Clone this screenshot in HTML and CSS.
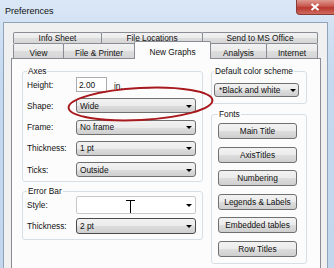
FILE: index.html
```html
<!DOCTYPE html>
<html lang="en">
<head>
    <meta charset="UTF-8">
    <title>Preferences</title>
    <link rel="stylesheet" href="styles.css">
</head>
<body>
    <div class="window">
        <div class="titlebar">
            <span class="title">Preferences</span>
            <span class="close">
                <svg width="10" height="8" viewBox="0 0 10 8">
                    <path d="M1.5 1 L8.5 7 M8.5 1 L1.5 7" stroke="#fff" stroke-width="2" />
                </svg>
            </span>
        </div>

        <div class="client">
            <div class="tabs">
                <div class="tab-row back">
                    <div class="tab t-info">Info Sheet</div>
                    <div class="tab t-loc">File Locations</div>
                    <div class="tab t-send">Send to MS Office</div>
                </div>
                <div class="tab-row front">
                    <div class="tab t-view">View</div>
                    <div class="tab t-print">File &amp; Printer</div>
                    <div class="tab t-graphs active">New Graphs</div>
                    <div class="tab t-analysis">Analysis</div>
                    <div class="tab t-net">Internet</div>
                </div>
            </div>

            <div class="panel">
                <div class="col-left">
                    <fieldset class="group axes">
                        <legend>Axes</legend>
                        <div class="row">
                            <span class="lbl">Height:</span>
                            <span class="edit">2.00</span>
                            <span class="unit">in.</span>
                            <span class="faint"></span>
                        </div>
                        <div class="row">
                            <span class="lbl">Shape:</span>
                            <span class="combo">Wide<i class="arrow"></i></span>
                        </div>
                        <div class="row">
                            <span class="lbl">Frame:</span>
                            <span class="combo">No frame<i class="arrow"></i></span>
                        </div>
                        <div class="row">
                            <span class="lbl">Thickness:</span>
                            <span class="combo">1 pt<i class="arrow"></i></span>
                        </div>
                        <div class="row">
                            <span class="lbl">Ticks:</span>
                            <span class="combo">Outside<i class="arrow"></i></span>
                        </div>
                    </fieldset>

                    <fieldset class="group errbar">
                        <legend>Error Bar</legend>
                        <div class="row tall">
                            <span class="lbl">Style:</span>
                            <span class="combo plain">
                                <svg class="bar-style" width="9" height="14" viewBox="0 0 9 14">
                                    <path d="M0 1.5 H9 M4.5 1.5 V14" stroke="#000" stroke-width="1" />
                                </svg>
                                <i class="arrow"></i>
                            </span>
                        </div>
                        <div class="row mid">
                            <span class="lbl">Thickness:</span>
                            <span class="combo focus">2 pt<i class="arrow"></i></span>
                        </div>
                    </fieldset>
                </div>

                <div class="col-right">
                    <fieldset class="group scheme">
                        <legend>Default color scheme</legend>
                        <span class="combo small">*Black and white<i class="arrow"></i></span>
                    </fieldset>

                    <fieldset class="group fonts">
                        <legend>Fonts</legend>
                        <button class="btn">Main Title</button>
                        <button class="btn">AxisTitles</button>
                        <button class="btn">Numbering</button>
                        <button class="btn">Legends &amp; Labels</button>
                        <button class="btn">Embedded tables</button>
                        <button class="btn">Row Titles</button>
                    </fieldset>
                </div>
            </div>
        </div>

        <!-- red mark drawn over the Shape box -->
        <svg class="mark" width="334" height="268" viewBox="0 0 334 268">
            <ellipse cx="140.5" cy="104" rx="72" ry="16" transform="rotate(-3 140.5 104)"
                     fill="none" stroke="#a8191e" stroke-width="2" />
        </svg>
    </div>
</body>
</html>
```

FILE: styles.css
```css
* {
    box-sizing: border-box;
}

body {
    margin: 0;
    font-family: "Liberation Sans", Arial, sans-serif;
    font-size: 8.3px;
    color: #111;
    background: #fff;
}

.window {
    position: relative;
    width: 334px;
    height: 268px;
    overflow: hidden;
    background: linear-gradient(to bottom, #dae7f6, #c4d8ef 30%, #c2d6ee);
}

.titlebar {
    height: 22px;
    display: flex;
    justify-content: space-between;
    align-items: flex-start;
}

.title {
    font-size: 9px;
    line-height: 10px;
    padding: 6px 0 0 5px;
}

.close {
    width: 38px;
    height: 15px;
    display: flex;
    align-items: center;
    justify-content: center;
    padding-right: 2px;
    background: linear-gradient(to bottom, #dd9990, #c8574e 45%, #b9372e 55%, #cf6a5f);
    border: 1px solid #8a3b35;
    border-top: none;
    border-right: none;
    border-radius: 0 0 0 4px;
}

.client {
    width: 325px;
    height: 246px;
    margin-left: 3px;
    background: #f0f0f0;
    border: 1px solid #8fa3bb;
    border-bottom: none;
    padding: 9px 0 0 7px;
}

/* tabs */
.tabs {
    margin-left: 2px;
}

.tab-row {
    display: flex;
}

.tab-row.back {
    height: 11px;
}

.tab-row.front {
    height: 15px;
}

.tab {
    height: 100%;
    display: flex;
    align-items: center;
    justify-content: center;
    border: 1px solid #898c95;
    border-bottom: none;
    border-radius: 2px 2px 0 0;
    background: linear-gradient(to bottom, #f2f2f2, #ebebeb 50%, #dddddd 51%, #d6d6d6);
    margin-left: -1px;
    white-space: nowrap;
}

.tab-row.front .tab {
    padding-top: 3px;
}

.tab:first-child {
    margin-left: 0;
}

.t-info { width: 89px; }
.t-loc { width: 102px; }
.t-send { width: 116px; }
.t-view { width: 51px; }
.t-print { width: 72px; }
.t-graphs { width: 77px; }
.t-analysis { width: 57px; }
.t-net { width: 52px; }

.tab.active {
    position: relative;
    z-index: 1;
    height: 18px;
    margin-top: -2px;
    padding-top: 0;
    background: #fcfcfc;
}

/* page */
.panel {
    width: 310px;
    height: 220px;
    background: #fcfcfc;
    border: 1px solid #898c95;
    padding: 7px 0 0 10px;
    display: flex;
    gap: 8px;
    align-items: flex-start;
}

.col-left {
    width: 181px;
    display: flex;
    flex-direction: column;
    gap: 4px;
}

.col-right {
    width: 96px;
    display: flex;
    flex-direction: column;
    gap: 5px;
}

.group {
    margin: 0;
    min-width: 0;
    border: 1px solid #d5dfe5;
    border-radius: 3px;
    padding: 0 4px 4px;
}

.group legend {
    padding: 0 1px;
    line-height: 10px;
}

.axes {
    padding-top: 1px;
    display: flex;
    flex-direction: column;
    gap: 6.3px;
}

.errbar {
    padding-bottom: 5px;
    display: flex;
    flex-direction: column;
    gap: 4px;
}

.row {
    height: 15px;
    display: flex;
    align-items: center;
}

.row.tall {
    height: 18px;
}

.row.mid {
    height: 16px;
}

.lbl {
    width: 49px;
    flex: none;
}

.edit {
    width: 31px;
    height: 15px;
    border: 1px solid #abadb3;
    background: #fff;
    padding-left: 2px;
    display: flex;
    align-items: center;
}

.unit {
    margin-left: 7px;
    padding-top: 2px;
}

.faint {
    width: 21px;
    height: 1px;
    margin: 8px 0 0 6px;
    background: #cfcfcf;
}

.combo {
    width: 120px;
    height: 100%;
    display: flex;
    align-items: center;
    padding-left: 3px;
    border: 1px solid #707070;
    border-radius: 3px;
    background: linear-gradient(to bottom, #f2f2f2, #ebebeb 50%, #dddddd 51%, #cfcfcf);
}

.combo.plain {
    background: #fff;
    border-color: #c9c9c9;
    border-radius: 2px;
}

.combo.focus {
    border-color: #4a4a4a;
}

.bar-style {
    margin-left: 46px;
    margin-top: 2px;
}

.arrow {
    margin-left: auto;
    margin-right: 3px;
    margin-top: 1px;
    width: 0;
    height: 0;
    border-left: 3px solid transparent;
    border-right: 3px solid transparent;
    border-top: 3px solid #000;
}

.scheme {
    padding: 7px 6px 6px 2px;
}

.combo.small {
    width: 85px;
    height: 14px;
    padding-left: 4px;
}

.combo.small .arrow {
    margin-right: 2px;
}

.fonts {
    padding: 4px 0 6px 6px;
    display: flex;
    flex-direction: column;
    gap: 7.6px;
}

.btn {
    width: 79px;
    height: 16px;
    padding: 0;
    font-family: inherit;
    font-size: 8.3px;
    color: #111;
    border: 1px solid #707070;
    border-radius: 3px;
    background: linear-gradient(to bottom, #f2f2f2, #ebebeb 50%, #dddddd 51%, #cfcfcf);
}

.mark {
    position: absolute;
    left: 0;
    top: 0;
    pointer-events: none;
}
```
